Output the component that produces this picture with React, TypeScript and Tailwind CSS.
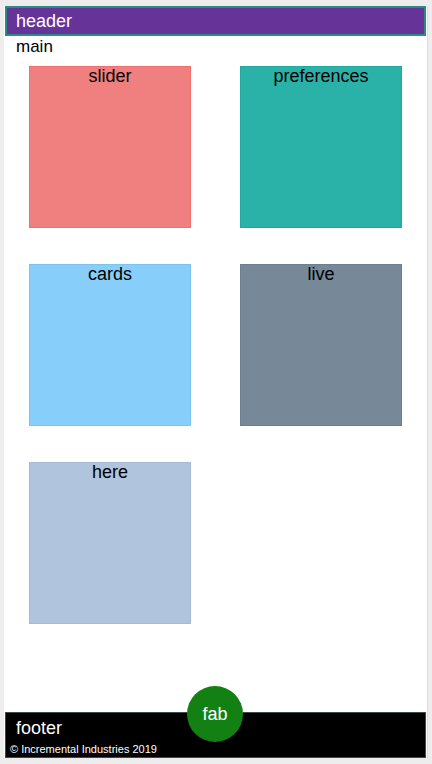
import React from "react";

const tiles = [
  { label: "slider", className: "bg-[#f08080] border-[#f07070]" },
  { label: "preferences", className: "bg-[#2bb2a8] border-[#22a89e]" },
  { label: "cards", className: "bg-[#87cefa] border-[#7cc4f0]" },
  { label: "live", className: "bg-[#778899] border-[#6c7e90]" },
  { label: "here", className: "bg-[#b0c4de] border-[#a6bad6]" },
];

export default function App() {
  return (
    <div
      className="h-[764px] bg-[#ededed] px-[4px] pt-[6px] pb-[6px]"
      style={{ fontFamily: '"Liberation Sans", Arial, sans-serif' }}
    >
      <div className="relative flex h-full flex-col bg-white border-r border-[#dcdcdc]">
        <header className="mx-[1px] flex h-[30px] items-center border-2 border-[#2b8a86] bg-[#663399] px-[9px] text-[18px] text-white">
          header
        </header>

        <main className="flex-1">
          <div className="px-[12px] pt-[1px] text-[17px] leading-[20px] text-black">main</div>
          <div className="mt-[9px] grid grid-cols-[162px_162px] gap-x-[49px] gap-y-[36px] pl-[25px]">
            {tiles.map((t) => (
              <div
                key={t.label}
                className={`h-[162px] w-[162px] border text-center text-[18px] leading-[18px] text-black ${t.className}`}
              >
                {t.label}
              </div>
            ))}
          </div>
        </main>

        <footer className="mx-[1px] flex h-[46px] flex-col border border-[#3a4a4a] bg-black px-[4px] text-white">
          <div className="pl-[6px] pt-[4px] text-[18px] leading-[22px]">footer</div>
          <div className="pt-[4px] text-[11px] leading-[13px]">© Incremental Industries 2019</div>
        </footer>

        <button className="absolute left-[183px] bottom-[16px] flex h-[56px] w-[56px] items-center justify-center rounded-full bg-[#138014] text-[18px] text-white">
          fab
        </button>
      </div>
    </div>
  );
}
